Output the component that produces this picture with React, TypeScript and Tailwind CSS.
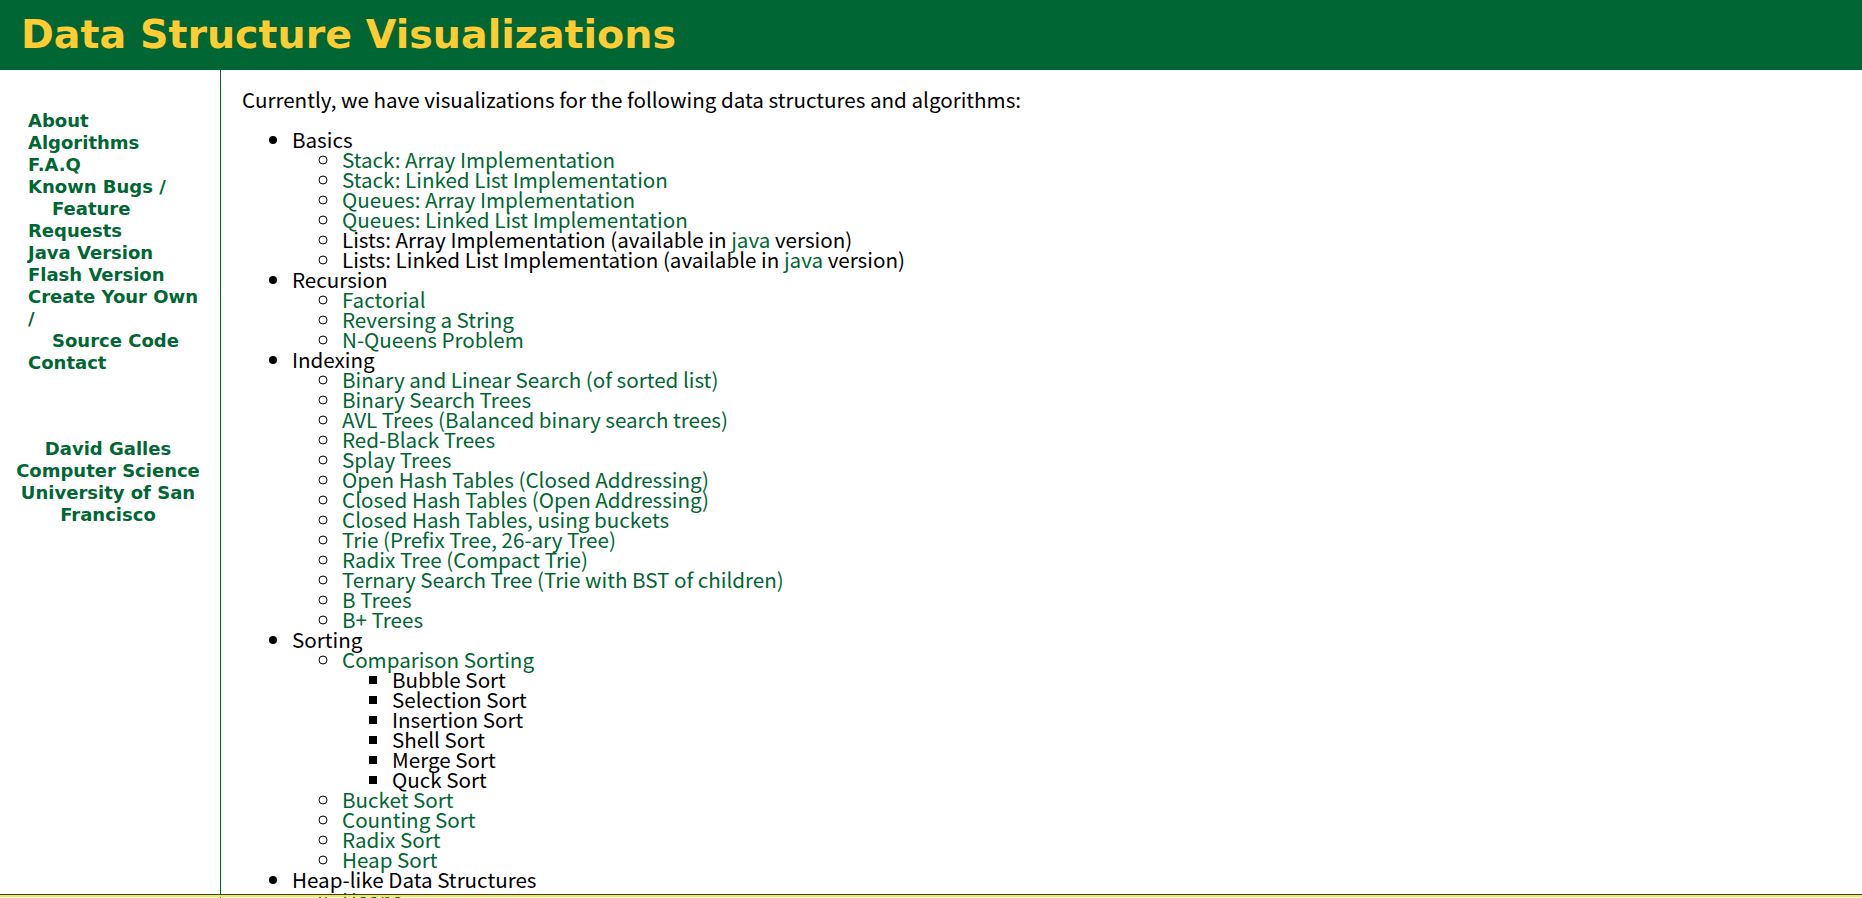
import React from 'react';

type Item = { text: React.ReactNode; link?: boolean; children?: Item[] };

const L = ({ children }: { children: React.ReactNode }) => (
  <a href="#" className="text-[#006633]">{children}</a>
);

const data: Item[] = [
  {
    text: 'Basics',
    children: [
      { text: 'Stack: Array Implementation', link: true },
      { text: 'Stack: Linked List Implementation', link: true },
      { text: 'Queues: Array Implementation', link: true },
      { text: 'Queues: Linked List Implementation', link: true },
      { text: <>Lists: Array Implementation (available in <L>java</L> version)</> },
      { text: <>Lists: Linked List Implementation (available in <L>java</L> version)</> },
    ],
  },
  {
    text: 'Recursion',
    children: [
      { text: 'Factorial', link: true },
      { text: 'Reversing a String', link: true },
      { text: 'N-Queens Problem', link: true },
    ],
  },
  {
    text: 'Indexing',
    children: [
      { text: 'Binary and Linear Search (of sorted list)', link: true },
      { text: 'Binary Search Trees', link: true },
      { text: 'AVL Trees (Balanced binary search trees)', link: true },
      { text: 'Red-Black Trees', link: true },
      { text: 'Splay Trees', link: true },
      { text: 'Open Hash Tables (Closed Addressing)', link: true },
      { text: 'Closed Hash Tables (Open Addressing)', link: true },
      { text: 'Closed Hash Tables, using buckets', link: true },
      { text: 'Trie (Prefix Tree, 26-ary Tree)', link: true },
      { text: 'Radix Tree (Compact Trie)', link: true },
      { text: 'Ternary Search Tree (Trie with BST of children)', link: true },
      { text: 'B Trees', link: true },
      { text: 'B+ Trees', link: true },
    ],
  },
  {
    text: 'Sorting',
    children: [
      {
        text: 'Comparison Sorting',
        link: true,
        children: [
          { text: 'Bubble Sort' },
          { text: 'Selection Sort' },
          { text: 'Insertion Sort' },
          { text: 'Shell Sort' },
          { text: 'Merge Sort' },
          { text: 'Quck Sort' },
        ],
      },
      { text: 'Bucket Sort', link: true },
      { text: 'Counting Sort', link: true },
      { text: 'Radix Sort', link: true },
      { text: 'Heap Sort', link: true },
    ],
  },
  {
    text: 'Heap-like Data Structures',
    children: [
      { text: 'Heaps', link: true },
      { text: 'Binomial Queues', link: true },
      { text: 'Fibonacci Heaps', link: true },
      { text: 'Leftist Heaps', link: true },
      { text: 'Skew Heaps', link: true },
    ],
  },
];

const listStyles = ['list-disc', 'list-[circle]', 'list-[square]'];

function List({ items, depth }: { items: Item[]; depth: number }) {
  return (
    <ul className={`${listStyles[depth]} pl-[50px]`}>
      {items.map((item, i) => (
        <li key={i}>
          {item.link ? <L>{item.text}</L> : item.text}
          {item.children && <List items={item.children} depth={depth + 1} />}
        </li>
      ))}
    </ul>
  );
}

// indented lines are the wrapped parts of the two long links
const navLinks: { label: string; indent?: boolean }[] = [
  { label: 'About' },
  { label: 'Algorithms' },
  { label: 'F.A.Q' },
  { label: 'Known Bugs /' },
  { label: 'Feature', indent: true },
  { label: 'Requests' },
  { label: 'Java Version' },
  { label: 'Flash Version' },
  { label: 'Create Your Own' },
  { label: '/' },
  { label: 'Source Code', indent: true },
  { label: 'Contact' },
];

export default function App() {
  return (
    <div className="h-screen overflow-hidden bg-white flex flex-col">
      <header className="h-[70px] shrink-0 bg-[#006633] flex items-center pl-[21px]">
        <h1 className="font-['DejaVu_Sans',sans-serif] font-bold text-[39.6px] text-[#ffcc33] leading-none">
          Data Structure Visualizations
        </h1>
      </header>

      <div className="flex flex-1 min-h-0">
        <aside className="w-[221px] shrink-0 border-r border-[#006633] pt-[40px] font-['DejaVu_Sans',sans-serif] font-bold text-[18px] leading-[22px] text-[#006633]">
          <nav className="pl-[28px] flex flex-col">
            {navLinks.map((n, i) => (
              <a key={i} href="#" className={n.indent ? 'pl-[24px]' : ''}>
                {n.label}
              </a>
            ))}
          </nav>
          <div className="mt-[64px] pr-[4px] text-center">
            <div>David Galles</div>
            <div>Computer Science</div>
            <div>University of San</div>
            <div>Francisco</div>
          </div>
        </aside>

        <main className="pl-[21px] pt-[19px] font-['Noto_Sans_CJK_SC',sans-serif] text-[20.6px] leading-[20px] text-black">
          <p className="mb-[20px]">
            Currently, we have visualizations for the following data structures and algorithms:
          </p>
          <List items={data} depth={0} />
        </main>
      </div>

      <div className="fixed left-0 right-0 top-[894px] h-[3px] border-t border-[#333d47] bg-[#ffe63a]" />
    </div>
  );
}
